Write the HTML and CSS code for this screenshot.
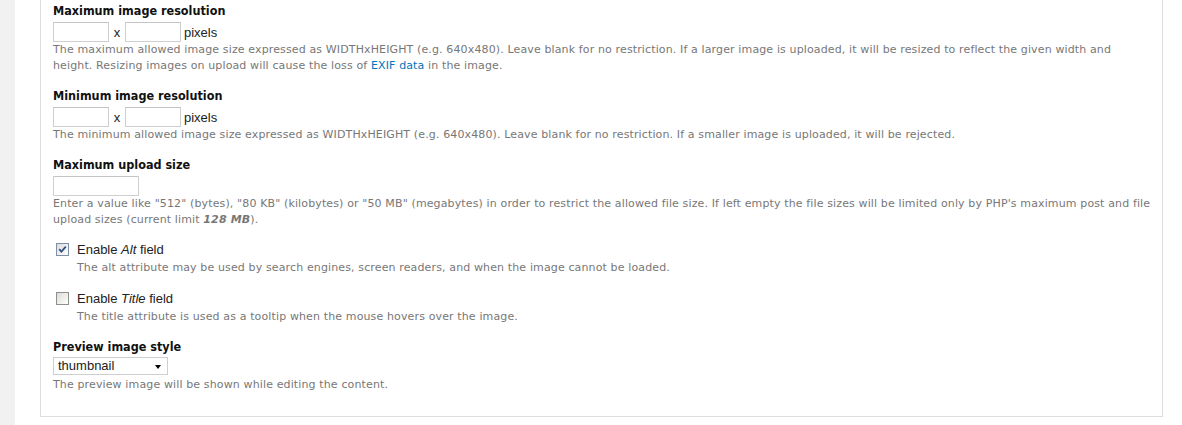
FILE: index.html
```html
<!DOCTYPE html>
<html>
<head>
<meta charset="utf-8">
<link rel="stylesheet" href="styles.css">
</head>
<body>
<div class="page">
  <div class="gutter"></div>
  <div class="main">
    <div class="fieldset">
      <div class="item">
        <div class="label">Maximum image resolution</div>
        <div class="row">
          <span class="input small"></span><span class="sep">x</span><span class="input small"></span><span class="unit">pixels</span>
        </div>
        <div class="desc">The maximum allowed image size expressed as WIDTHxHEIGHT (e.g. 640x480). Leave blank for no restriction. If a larger image is uploaded, it will be resized to reflect the given width and height. Resizing images on upload will cause the loss of <a class="link" href="#">EXIF data</a> in the image.</div>
      </div>
      <div class="item">
        <div class="label">Minimum image resolution</div>
        <div class="row">
          <span class="input small"></span><span class="sep">x</span><span class="input small"></span><span class="unit">pixels</span>
        </div>
        <div class="desc">The minimum allowed image size expressed as WIDTHxHEIGHT (e.g. 640x480). Leave blank for no restriction. If a smaller image is uploaded, it will be rejected.</div>
      </div>
      <div class="item">
        <div class="label">Maximum upload size</div>
        <div class="row">
          <span class="input medium"></span>
        </div>
        <div class="desc">Enter a value like "512" (bytes), "80 KB" (kilobytes) or "50 MB" (megabytes) in order to restrict the allowed file size. If left empty the file sizes will be limited only by PHP's maximum post and file upload sizes (current limit <em class="strong">128 MB</em>).</div>
      </div>
      <div class="item check-item first-check">
        <div class="check-row">
          <span class="checkbox checked">
            <svg width="9" height="9" viewBox="0 0 9 9"><path d="M1.2 4.2 L3.4 6.6 L7.8 1.6" fill="none" stroke="#34508a" stroke-width="1.8"/></svg>
          </span>
          <span class="check-label">Enable <em>Alt</em> field</span>
        </div>
        <div class="desc indent">The alt attribute may be used by search engines, screen readers, and when the image cannot be loaded.</div>
      </div>
      <div class="item check-item">
        <div class="check-row">
          <span class="checkbox"></span>
          <span class="check-label">Enable <em>Title</em> field</span>
        </div>
        <div class="desc indent">The title attribute is used as a tooltip when the mouse hovers over the image.</div>
      </div>
      <div class="item last">
        <div class="label">Preview image style</div>
        <div class="row select-row">
          <span class="select"><span class="select-text">thumbnail</span><span class="arrow"></span></span>
        </div>
        <div class="desc select-desc">The preview image will be shown while editing the content.</div>
      </div>
    </div>
  </div>
</div>
</body>
</html>
```

FILE: styles.css
```css
html, body {
  margin: 0;
  padding: 0;
  background: #ffffff;
}
.page {
  display: flex;
  height: 425px;
  overflow: hidden;
}
.gutter {
  width: 15px;
  background: #f1f1f1;
  flex: none;
}
.main {
  flex: none;
  padding-left: 25px;
}
.fieldset {
  width: 1099px;
  padding: 2px 10px 23px 12px;
  border: 1px solid #dddddd;
  border-top: none;
  font-family: "DejaVu Sans", Verdana, sans-serif;
  color: #000;
}
.item {
  margin-bottom: 13px;
}
.item.first-check {
  margin-top: -1px;
}
.item.check-item + .check-item {
  margin-top: 1px;
}
.item.check-item + .last {
  margin-top: 3px;
}
.item.last {
  margin-bottom: 0;
}
.label {
  font-family: "DejaVu Sans Condensed", "DejaVu Sans", Verdana, sans-serif;
  font-weight: bold;
  font-size: 12.5px;
  line-height: 18px;
  height: 18px;
  color: #111;
}
.row {
  display: flex;
  align-items: center;
  margin-top: 2px;
  height: 20px;
  font-family: "Liberation Sans", Arial, sans-serif;
  font-size: 13px;
  color: #222;
}
.row.select-row {
  margin-top: 1px;
  height: 18px;
}
.input {
  display: block;
  height: 18px;
  border: 1px solid #cfcfcf;
  border-top-color: #c4c4c4;
  background: #fff;
  flex: none;
}
.input.small {
  width: 54px;
}
.input.medium {
  width: 84px;
}
.sep {
  width: 16px;
  text-align: center;
}
.unit {
  margin-left: 3px;
}
.desc {
  font-size: 11px;
  letter-spacing: 0.13px;
  line-height: 16px;
  color: #777;
}
.desc.select-desc {
  margin-top: 2px;
}
.desc.indent {
  padding-left: 24px;
}
.link {
  color: #0074bd;
  text-decoration: none;
}
.strong {
  font-weight: bold;
}
.check-row {
  display: flex;
  align-items: center;
  height: 18px;
  margin-bottom: 2px;
}
.checkbox {
  box-sizing: border-box;
  width: 13px;
  height: 13px;
  margin-left: 3px;
  margin-right: 8px;
  border: 1px solid #8f8f8f;
  background: linear-gradient(135deg, #dcdcd7 0%, #f4f4f1 70%, #ffffff 100%);
  display: flex;
  align-items: center;
  justify-content: center;
}
.checkbox svg {
  display: block;
}
.checkbox.checked {
  border-color: #7f8fa9;
}
.check-label {
  font-family: "Liberation Sans", Arial, sans-serif;
  font-size: 13px;
  color: #222;
}
.select {
  box-sizing: border-box;
  display: flex;
  align-items: center;
  width: 115px;
  height: 18px;
  border: 1px solid #cfcfcf;
  padding-left: 4px;
  padding-right: 6px;
  background: #fff;
}
.select-text {
  flex: 1;
  line-height: 16px;
}
.arrow {
  width: 0;
  height: 0;
  border-left: 3.5px solid transparent;
  border-right: 3.5px solid transparent;
  border-top: 4px solid #000;
  margin-top: 2px;
}
```
